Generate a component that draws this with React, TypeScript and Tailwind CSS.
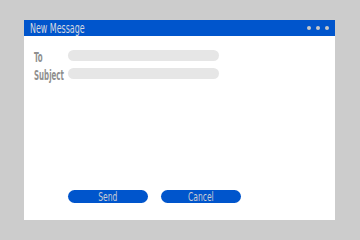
export default function App() {
  const font = { fontFamily: '"DejaVu Sans Condensed", "Liberation Sans", sans-serif' };
  return (
    <div className="w-[360px] h-[240px] bg-[#cccccc] pt-[20px] pl-[24px]">
      <div className="w-[311px] h-[200px] bg-white flex flex-col" style={font}>
        <div className="h-[16px] bg-[#0055cc] flex items-center justify-between pl-[6px] pr-[6px]">
          <span className="text-[14px] leading-none text-[#d4d8e0] origin-left scale-x-[0.63] inline-block whitespace-nowrap">New Message</span>
          <div className="flex gap-[5px]">
            <span className="w-[4px] h-[4px] rounded-full bg-[#c8c8c8]" />
            <span className="w-[4px] h-[4px] rounded-full bg-[#c8c8c8]" />
            <span className="w-[4px] h-[4px] rounded-full bg-[#c8c8c8]" />
          </div>
        </div>
        <div className="flex flex-col gap-[7px] pt-[14px] pl-[10px]">
          <div className="flex items-center h-[11px]">
            <span className="w-[34px] text-[14px] font-bold text-[#8f8f8f] leading-none inline-block origin-left scale-x-[0.56] translate-y-[1px] whitespace-nowrap">To</span>
            <div className="w-[151px] h-[11px] rounded-full bg-[#e6e6e6]" />
          </div>
          <div className="flex items-center h-[11px]">
            <span className="w-[34px] text-[14px] font-bold text-[#8f8f8f] leading-none inline-block origin-left scale-x-[0.56] translate-y-[1px] whitespace-nowrap">Subject</span>
            <div className="w-[151px] h-[11px] rounded-full bg-[#e6e6e6]" />
          </div>
        </div>
        <div className="flex gap-[13px] pl-[44px] mt-[111px]">
          <div className="w-[80px] h-[13px] rounded-full bg-[#0055cc] flex items-center justify-center">
            <span className="text-[13px] leading-none text-[#c8ccd4] inline-block scale-x-[0.65]">Send</span>
          </div>
          <div className="w-[80px] h-[13px] rounded-full bg-[#0055cc] flex items-center justify-center">
            <span className="text-[13px] leading-none text-[#c8ccd4] inline-block scale-x-[0.65]">Cancel</span>
          </div>
        </div>
      </div>
    </div>
  );
}
